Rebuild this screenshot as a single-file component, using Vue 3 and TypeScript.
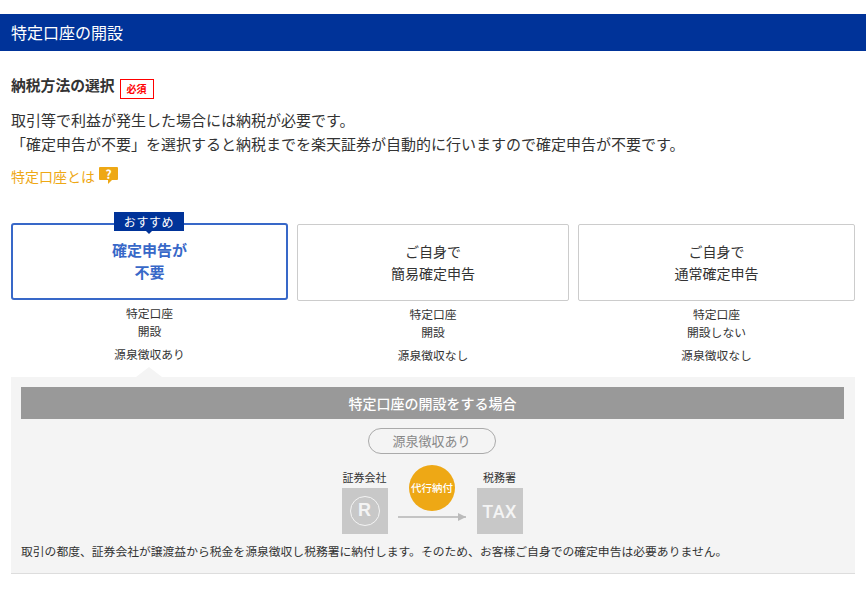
<script setup lang="ts">
interface TaxOption {
  lines: string[]
  account: string[]
  withholding: string
  recommended?: boolean
}

const options: TaxOption[] = [
  { lines: ['確定申告が', '不要'], account: ['特定口座', '開設'], withholding: '源泉徴収あり', recommended: true },
  { lines: ['ご自身で', '簡易確定申告'], account: ['特定口座', '開設'], withholding: '源泉徴収なし' },
  { lines: ['ご自身で', '通常確定申告'], account: ['特定口座', '開設しない'], withholding: '源泉徴収なし' }
]
</script>

<template>
  <main class="page">
    <h1 class="bar">特定口座の開設</h1>

    <section class="content">
      <div class="heading">
        <h2>納税方法の選択</h2>
        <span class="required">必須</span>
      </div>
      <p class="lead">
        取引等で利益が発生した場合には納税が必要です。<br />
        「確定申告が不要」を選択すると納税までを楽天証券が自動的に行いますので確定申告が不要です。
      </p>
      <a class="help" href="#">
        特定口座とは
        <span class="help-mark">?</span>
      </a>

      <div class="options">
        <div v-for="opt in options" :key="opt.lines[1]" class="option">
          <button type="button" class="card" :class="{ selected: opt.recommended }">
            <span v-if="opt.recommended" class="ribbon">おすすめ</span>
            <span v-for="line in opt.lines" :key="line" class="card-line">{{ line }}</span>
          </button>
          <div class="account">
            <span v-for="line in opt.account" :key="line">{{ line }}</span>
          </div>
          <div class="withholding">{{ opt.withholding }}</div>
        </div>
      </div>

      <div class="panel">
        <div class="panel-title">特定口座の開設をする場合</div>
        <div class="pill">源泉徴収あり</div>
        <div class="flow">
          <div class="party">
            <span class="party-name">証券会社</span>
            <div class="tile"><span class="reg">R</span></div>
          </div>
          <div class="transfer">
            <div class="coin">代行納付</div>
            <div class="arrow"></div>
          </div>
          <div class="party">
            <span class="party-name">税務署</span>
            <div class="tile"><span class="tax">TAX</span></div>
          </div>
        </div>
        <p class="note">取引の都度、証券会社が譲渡益から税金を源泉徴収し税務署に納付します。そのため、お客様ご自身での確定申告は必要ありません。</p>
      </div>
    </section>
  </main>
</template>

<style scoped>
.page {
  width: 866px;
  height: 600px;
  overflow: hidden;
  padding-top: 14px;
  box-sizing: border-box;
  background: #fff;
  color: #333;
  font-family: 'Noto Sans CJK JP', 'Noto Sans', sans-serif;
}
.bar {
  margin: 0;
  height: 37px;
  padding-left: 11px;
  background: #003399;
  color: #fff;
  font-size: 16px;
  font-weight: 400;
  line-height: 37px;
}
.content {
  padding: 22px 11px 0;
}
.heading {
  display: flex;
  align-items: center;
  gap: 5px;
  height: 24px;
}
.heading h2 {
  margin: 0;
  font-size: 14.8px;
  font-weight: 700;
  line-height: 24px;
}
.required {
  width: 34px;
  height: 20px;
  margin-top: 8px;
  box-sizing: border-box;
  border: 1px solid #f00;
  color: #f00;
  font-size: 10px;
  font-weight: 700;
  line-height: 18px;
  text-align: center;
}
.lead {
  margin: 11px 0 0;
  font-size: 15px;
  line-height: 24px;
}
.help {
  display: flex;
  align-items: flex-start;
  gap: 4px;
  height: 20px;
  margin-top: 10px;
  color: #eea815;
  font-size: 14px;
  line-height: 20px;
  text-decoration: none;
}
.help-mark {
  position: relative;
  width: 19px;
  height: 13px;
  margin-top: 1px;
  border-radius: 1px;
  background: #eea815;
  color: #fff;
  font-size: 12px;
  font-weight: 700;
  line-height: 13px;
  text-align: center;
}
.help-mark::after {
  content: '';
  position: absolute;
  top: 13px;
  left: 9px;
  border-style: solid;
  border-width: 4px 4px 0 0;
  border-color: #eea815 transparent transparent;
}
.options {
  display: grid;
  grid-template-columns: 277px 272px 277px;
  column-gap: 9px;
  margin-top: 37px;
}
.option {
  display: flex;
  flex-direction: column;
  align-items: center;
}
.card {
  position: relative;
  display: flex;
  flex-direction: column;
  justify-content: center;
  width: 100%;
  height: 77px;
  margin-top: 1px;
  padding: 0 0 1px;
  box-sizing: border-box;
  border: 1px solid #ccc;
  border-radius: 2px;
  background: #fff;
  color: #333;
  font-family: inherit;
  font-size: 14px;
  line-height: 22px;
}
.card.selected {
  margin-top: 0;
  border: 2px solid #3868c8;
  border-radius: 3px;
  color: #3868c8;
  font-size: 15px;
  font-weight: 700;
}
.card-line {
  display: block;
}
.ribbon {
  position: absolute;
  top: -13px;
  left: 101px;
  width: 70px;
  height: 19px;
  background: #003399;
  color: #fff;
  font-size: 12px;
  font-weight: 400;
  letter-spacing: 0.05em;
  line-height: 19px;
}
.ribbon::after {
  content: '';
  position: absolute;
  top: 19px;
  left: 50%;
  margin-left: -3px;
  border: 3px solid transparent;
  border-top-color: #003399;
  border-bottom-width: 0;
}
.account {
  display: flex;
  flex-direction: column;
  align-items: center;
  margin-top: 4px;
  font-size: 11.8px;
  line-height: 18px;
}
.withholding {
  margin-top: 5px;
  font-size: 11.8px;
  line-height: 18px;
}
.panel {
  position: relative;
  margin-top: 13px;
  height: 197px;
  padding: 10px 11px 0 10px;
  box-sizing: border-box;
  background: #f4f4f4;
  border-bottom: 1px solid #ddd;
}
.panel::before {
  content: '';
  position: absolute;
  top: -10px;
  left: 125px;
  border: 13px solid transparent;
  border-top-width: 0;
  border-bottom: 10px solid #f4f4f4;
}
.panel-title {
  height: 32px;
  background: #999;
  color: #fff;
  font-size: 14px;
  font-weight: 500;
  line-height: 32px;
  text-align: center;
}
.pill {
  position: relative;
  left: -1px;
  width: 128px;
  height: 26px;
  margin: 9px auto 0;
  box-sizing: border-box;
  border: 1.5px solid #aaa;
  border-radius: 13px;
  color: #888;
  font-size: 13px;
  line-height: 23px;
  text-align: center;
}
.flow {
  display: flex;
  justify-content: center;
  align-items: flex-end;
  gap: 10px;
  height: 80px;
  margin-left: -1px;
}
.party {
  display: flex;
  flex-direction: column;
  align-items: center;
  width: 47px;
}
.party-name {
  font-size: 11px;
  line-height: 22px;
  white-space: nowrap;
}
.tile {
  display: flex;
  align-items: center;
  justify-content: center;
  width: 46px;
  height: 46px;
  background: #c8c8c8;
  color: #f4f4f4;
}
.reg {
  width: 30px;
  height: 30px;
  box-sizing: border-box;
  border: 1.5px solid #f4f4f4;
  border-radius: 50%;
  font-family: 'Liberation Sans', sans-serif;
  font-size: 18px;
  font-weight: 700;
  line-height: 27px;
  text-align: center;
}
.tax {
  font-family: Roboto, 'Liberation Sans', sans-serif;
  font-size: 18px;
  font-weight: 500;
  letter-spacing: 0.02em;
}
.transfer {
  display: flex;
  flex-direction: column;
  align-items: center;
  width: 68px;
  height: 69px;
}
.coin {
  width: 46px;
  height: 46px;
  border-radius: 50%;
  background: #eea815;
  color: #fff;
  font-size: 10.5px;
  font-weight: 500;
  line-height: 46px;
  text-align: center;
  white-space: nowrap;
}
.arrow {
  position: relative;
  width: 100%;
  height: 2px;
  margin-top: 5px;
  background: #c4c4c4;
}
.arrow::after {
  content: '';
  position: absolute;
  right: 0;
  top: -3px;
  border-style: solid;
  border-width: 4px 0 4px 8px;
  border-color: transparent transparent transparent #bbb;
}
.note {
  margin: 8px 0 0;
  font-size: 11.8px;
  line-height: 18px;
  white-space: nowrap;
}
</style>

<style>
html,
body {
  background: #fff;
}
</style>
